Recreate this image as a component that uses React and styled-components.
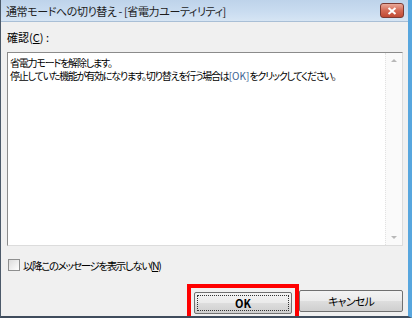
import React from "react";
import styled, { createGlobalStyle } from "styled-components";

const Global = createGlobalStyle`
  html, body { margin: 0; padding: 0; background: #f0f0f0; }
  body {
    font-family: "Noto Sans CJK JP", "DejaVu Sans", sans-serif;
    font-feature-settings: "palt";
  }
`;

const Frame = styled.div`
  width: 412px;
  height: 318px;
  box-sizing: border-box;
  display: flex;
  flex-direction: column;
  background: #f0f0f0;
  border-left: 1px solid #4c5a6a;
  border-right: 4px solid #57a6de;
  border-bottom: 2px solid #3f4c5c;
  overflow: hidden;
`;

const TitleBar = styled.div`
  height: 21px;
  flex: none;
  display: flex;
  align-items: center;
  justify-content: space-between;
  padding: 0 4px 0 5px;
  background: linear-gradient(180deg, #bed3ea 0%, #c9dcf0 55%, #d6e5f4 100%);
  border-bottom: 1px solid #a9bfd6;
`;

const Title = styled.div`
  font-size: 11px;
  letter-spacing: -0.4px;
  color: #1d1d1d;
`;

const Close = styled.div`
  width: 22px;
  height: 13px;
  border: 1px solid #7c3a32;
  border-radius: 3px;
  background: linear-gradient(180deg, #e9a99a 0%, #d46a55 50%, #c04a34 100%);
  display: flex;
  align-items: center;
  justify-content: center;
`;

const Body = styled.div`
  flex: 1;
  display: flex;
  flex-direction: column;
  padding: 6px 5px 0 6px;
`;

const Label = styled.div`
  font-size: 11px;
  color: #000;
  height: 18px;
  line-height: 18px;
`;

const U = styled.span`
  text-decoration: underline;
`;

const Box = styled.div`
  margin-top: 6px;
  height: 194px;
  box-sizing: border-box;
  display: flex;
  background: #fff;
  border: 1px solid #8b8b8b;
  border-right-color: #dcdcdc;
  border-bottom-color: #dcdcdc;
`;

const Text = styled.div`
  flex: 1;
  padding: 3px 2px;
  font-size: 10px;
  letter-spacing: -1.2px;
  line-height: 13px;
  color: #000;
  white-space: nowrap;
`;

const Key = styled.span`
  color: #3d5f92;
  letter-spacing: 0;
`;

const Scroll = styled.div`
  width: 16px;
  display: flex;
  flex-direction: column;
  justify-content: space-between;
  align-items: center;
  background: #fafafa;
  border-left: 1px dotted #e2e2e2;
  padding: 6px 0;
`;

const Arrow = styled.div`
  width: 0;
  height: 0;
  border-left: 3px solid transparent;
  border-right: 3px solid transparent;
  ${(p) => (p.down ? "border-top: 3px solid #b8b8b8;" : "border-bottom: 3px solid #b8b8b8;")}
`;

const CheckRow = styled.div`
  margin-top: 12px;
  height: 14px;
  display: flex;
  align-items: center;
  gap: 2px;
  font-size: 10.5px;
  letter-spacing: -1.4px;
  color: #000;
  padding-left: 1px;
`;

const Check = styled.span`
  width: 10px;
  height: 10px;
  margin-right: 1px;
  border: 1px solid #8e8f8f;
  background: linear-gradient(135deg, #dcdcdc, #fff);
`;

const Buttons = styled.div`
  margin-top: 12px;
  display: flex;
  align-items: flex-start;
  justify-content: flex-end;
`;

const Highlight = styled.div`
  border: 4px solid #ff0000;
  padding: 4px 3px 3px 3px;
`;

const Button = styled.div`
  width: ${(p) => p.w}px;
  height: 22px;
  margin-top: ${(p) => p.top || 0}px;
  box-sizing: border-box;
  display: flex;
  align-items: center;
  justify-content: center;
  font-size: 11px;
  font-weight: ${(p) => (p.bold ? 700 : 400)};
  letter-spacing: ${(p) => (p.bold ? 0 : -0.8)}px;
  color: #000;
  border: 1px solid #707070;
  border-radius: 2px;
  background: linear-gradient(180deg, #f3f3f3 0%, #ebebeb 48%, #dddddd 52%, #cfcfcf 100%);
  outline: ${(p) => (p.focus ? "1px dotted #333" : "none")};
  outline-offset: -4px;
`;

export default function App() {
  return (
    <>
      <Global />
      <Frame>
        <TitleBar>
          <Title>通常モードへの切り替え - [省電力ユーティリティ]</Title>
          <Close>
            <svg width="10" height="8" viewBox="0 0 10 8">
              <path d="M1.5 1 L8.5 7 M8.5 1 L1.5 7" stroke="#fff" strokeWidth="2" />
            </svg>
          </Close>
        </TitleBar>
        <Body>
          <Label>確認(<U>C</U>) :</Label>
          <Box>
            <Text>
              省電力モードを解除します。
              <br />
              停止していた機能が有効になります。切り替えを行う場合は<Key>[OK]</Key>をクリックしてください。
            </Text>
            <Scroll>
              <Arrow />
              <Arrow down />
            </Scroll>
          </Box>
          <CheckRow>
            <Check />
            <span>以降このメッセージを表示しない(<U>N</U>)</span>
          </CheckRow>
          <Buttons>
            <Highlight>
              <Button w={98} bold focus>OK</Button>
            </Highlight>
            <Button w={104} top={6}>キャンセル</Button>
          </Buttons>
        </Body>
      </Frame>
    </>
  );
}
